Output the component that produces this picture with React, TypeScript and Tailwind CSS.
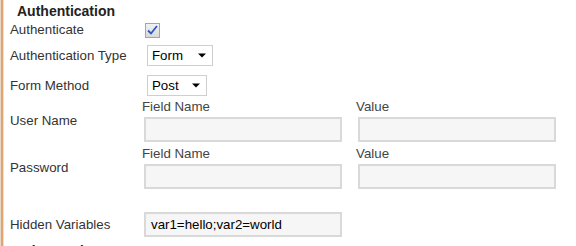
import React from 'react';

function Caret() {
  return (
    <svg width="8" height="5" viewBox="0 0 8 5" className="block">
      <path d="M0 0.5 H8 L4 4.5 Z" fill="#000" />
    </svg>
  );
}

function Select({ value, width }: { value: string; width: string }) {
  return (
    <div className={`ml-[4px] h-[21px] ${width} flex items-center justify-between border border-[#cfcfcf] bg-white pl-[4px] pr-[6px] text-[13.3px] text-black`}>
      <span>{value}</span>
      <Caret />
    </div>
  );
}

function TextBox({ value = '' }: { value?: string }) {
  return (
    <div className="h-[25px] w-[198px] border-2 border-[#d9d9d9] bg-[#f6f6f6] pl-[5px] flex items-center text-[13.3px] text-black">
      {value}
    </div>
  );
}

function PairRow({ label }: { label: string }) {
  return (
    <div className="grid grid-cols-[132px_1fr] items-center">
      <div className="text-[13.3px] text-[#333]">{label}</div>
      <div className="flex">
        <div className="w-[214px]">
          <div className="h-[14px] leading-[14px] text-[13.3px] text-[#444]">Field Name</div>
          <div className="mt-[3px] ml-[2px]">
            <TextBox />
          </div>
        </div>
        <div>
          <div className="h-[14px] leading-[14px] text-[13.3px] text-[#444]">Value</div>
          <div className="mt-[3px] ml-[2px]">
            <TextBox />
          </div>
        </div>
      </div>
    </div>
  );
}

export default function App() {
  return (
    <div className="w-[576px] h-[246px] overflow-hidden bg-white flex font-['Liberation_Sans',Arial,sans-serif] leading-[20px]">
      {/* left accent strip */}
      <div className="w-[4px] shrink-0 flex">
        <div className="w-[1px] bg-[#ead8c6]" />
        <div className="w-[2px] bg-[#dfa673]" />
        <div className="w-[1px] bg-[#f1dcc8]" />
      </div>

      <div className="flex-1 pl-[6px]">
        <div className="h-[20px] pt-[1px] pl-[7px] text-[14px] font-bold text-[#222]">Authentication</div>

        <div className="grid grid-cols-[133px_1fr] h-[20px] items-center">
          <div className="text-[13.3px] text-[#333]">Authenticate</div>
          <div className="ml-[2px] w-[15px] h-[15px] border border-[#a5a5a5] bg-gradient-to-b from-[#f2f2f2] to-[#d9d9d9] flex items-center justify-center">
            <svg width="11" height="10" viewBox="0 0 11 10">
              <path d="M1 5.5 L4 8.5 L10 1" fill="none" stroke="#2f56c7" strokeWidth="1.8" />
            </svg>
          </div>
        </div>

        <div className="mt-[5px] grid grid-cols-[133px_1fr] h-[20px] items-center">
          <div className="text-[13.3px] text-[#333]">Authentication Type</div>
          <Select value="Form" width="w-[66px]" />
        </div>

        <div className="mt-[10px] grid grid-cols-[133px_1fr] h-[21px] items-center">
          <div className="text-[13.3px] text-[#333]">Form Method</div>
          <Select value="Post" width="w-[60px]" />
        </div>

        <div className="mt-[4px]">
          <PairRow label="User Name" />
        </div>
        <div className="mt-[5px]">
          <PairRow label="Password" />
        </div>

        <div className="mt-[23px] grid grid-cols-[134px_1fr] items-center">
          <div className="text-[13.3px] text-[#333]">Hidden Variables</div>
          <TextBox value="var1=hello;var2=world" />
        </div>

        <div className="h-[20px] pt-[4px] pl-[7px] text-[14px] font-bold text-[#222]">Advanced</div>
      </div>
    </div>
  );
}
